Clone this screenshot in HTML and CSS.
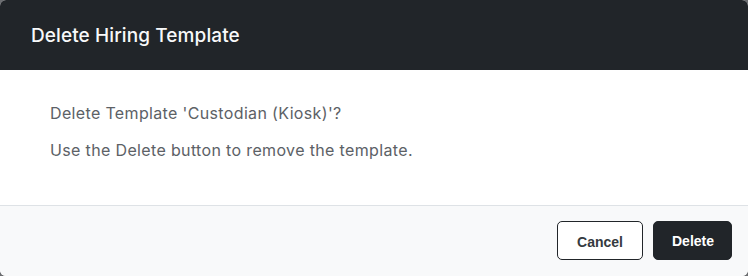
FILE: index.html
```html
<!DOCTYPE html>
<html>
<head>
<meta charset="utf-8">
<link rel="stylesheet" href="styles.css">
</head>
<body>
<div class="modal">
  <div class="modal-header">
    <h5 class="modal-title">Delete Hiring Template</h5>
  </div>
  <div class="modal-body">
    <p>Delete Template 'Custodian (Kiosk)'?</p>
    <p>Use the Delete button to remove the template.</p>
  </div>
  <div class="modal-footer">
    <button class="btn btn-outline">Cancel</button>
    <button class="btn btn-dark">Delete</button>
  </div>
</div>
</body>
</html>
```
FILE: styles.css
```css
html, body {
  margin: 0;
  padding: 0;
  background: #6b6d70;
  width: 748px;
  height: 276px;
  overflow: hidden;
}
.modal {
  width: 748px;
  height: 276px;
  border-radius: 6px;
  overflow: hidden;
  display: flex;
  flex-direction: column;
  background: #fff;
  font-family: Inter, "Noto Sans", sans-serif;
}
.modal-header {
  background: #212529;
  height: 70px;
  box-sizing: border-box;
  display: flex;
  align-items: center;
  padding: 0 31px;
}
.modal-title {
  margin: 0;
  color: #f8f9fa;
  font-size: 19px;
  font-weight: 500;
  letter-spacing: 0.1px;
}
.modal-body {
  height: 135px;
  box-sizing: border-box;
  padding: 33px 50px 0;
  color: #5c6166;
  font-size: 16px;
  letter-spacing: 0.35px;
}
.modal-body p {
  margin: 0 0 17px;
  line-height: 20px;
}
.modal-footer {
  flex: 1;
  background: #f8f9fa;
  border-top: 1px solid #dee2e6;
  display: flex;
  justify-content: flex-end;
  align-items: center;
  gap: 10px;
  padding: 0 16px 1px;
}
.btn {
  height: 39px;
  box-sizing: border-box;
  border-radius: 5px;
  font-family: "Liberation Sans", Arial, sans-serif;
  font-size: 14px;
  font-weight: bold;
  padding: 0 18px;
  cursor: pointer;
}
.btn-outline {
  width: 86px;
  background: #fff;
  border: 1px solid #212529;
  color: #343a40;
  padding-top: 3px;
}
.btn-dark {
  width: 79px;
  background: #212529;
  border: 1px solid #212529;
  color: #fff;
}
```
